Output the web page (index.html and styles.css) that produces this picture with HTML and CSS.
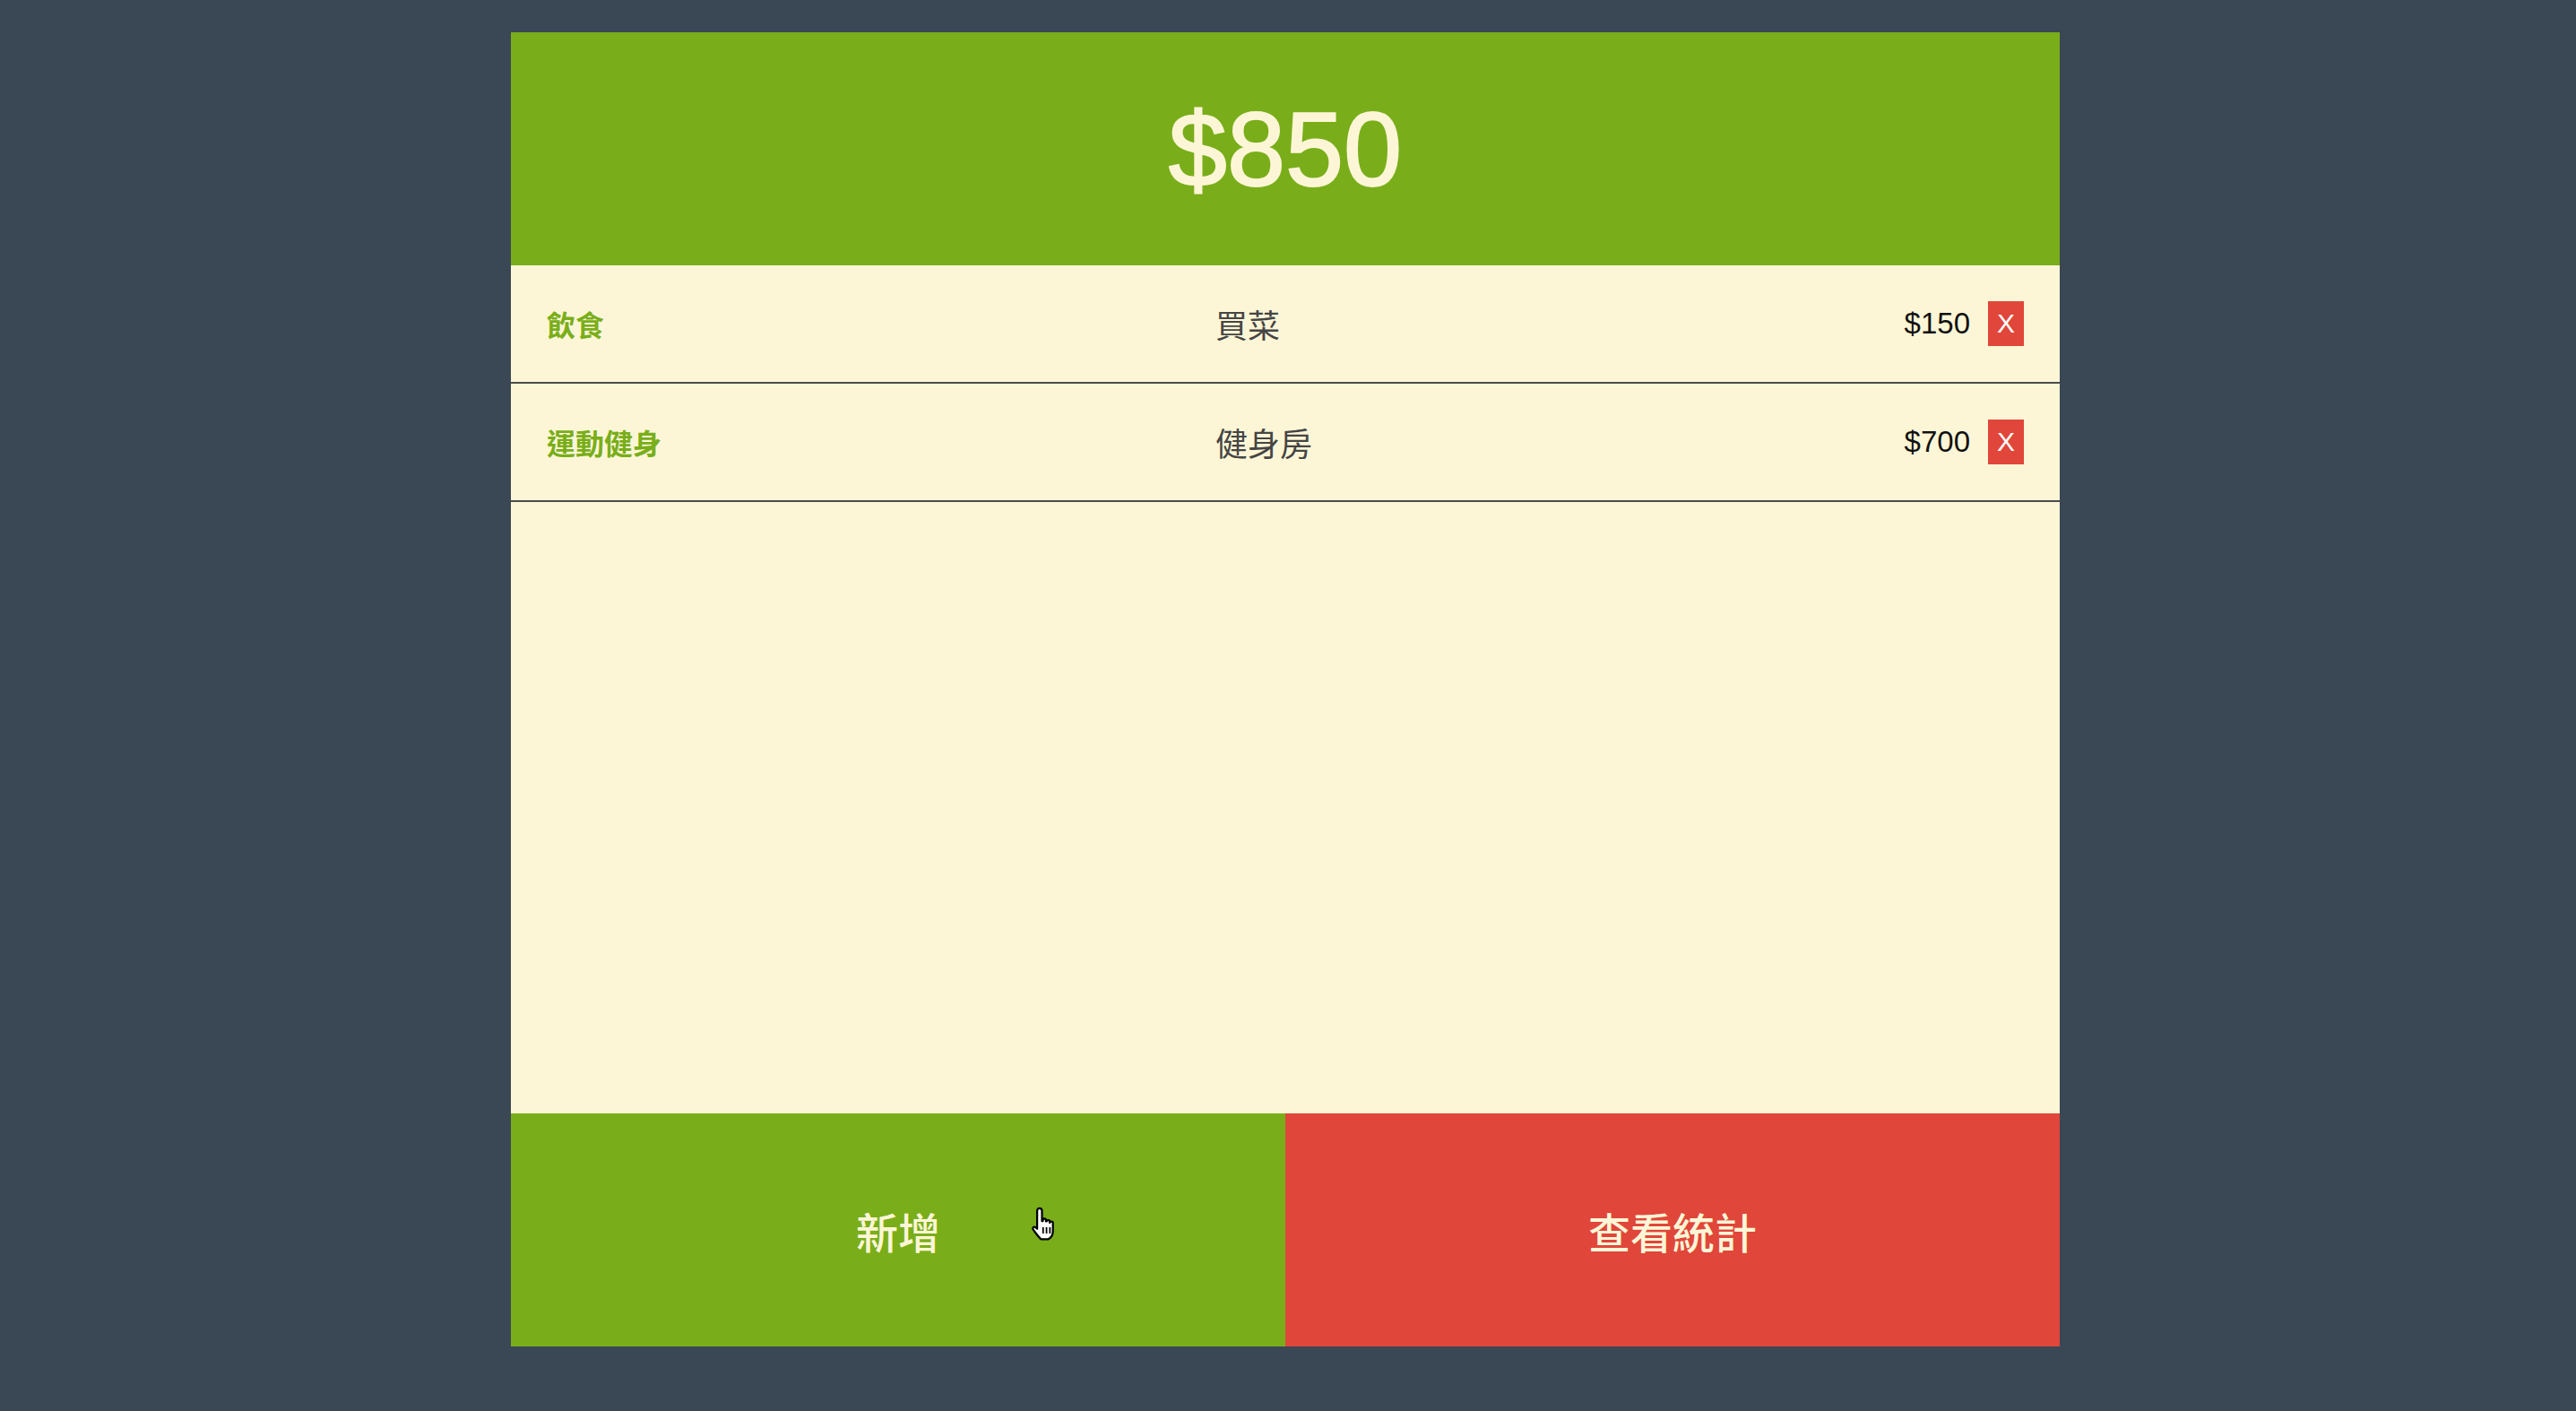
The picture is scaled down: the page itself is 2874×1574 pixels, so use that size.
FILE: index.html
```html
<!DOCTYPE html>
<html lang="zh-Hant">
<head>
<meta charset="utf-8">
<title>記帳</title>
<link rel="stylesheet" href="styles.css">
</head>
<body>
<div class="page">
  <main class="app">
    <header class="total">$850</header>
    <section class="list">
      <div class="row">
        <span class="cat">飲食</span>
        <span class="desc">買菜</span>
        <span class="amount">$150</span>
        <span class="del">X</span>
      </div>
      <div class="row">
        <span class="cat">運動健身</span>
        <span class="desc">健身房</span>
        <span class="amount">$700</span>
        <span class="del">X</span>
      </div>
    </section>
    <footer class="actions">
      <div class="btn btn-add">新增
        <svg class="cursor" viewBox="0 0 20 24" width="32" height="38" aria-hidden="true">
          <path d="M6 1.2c1 0 1.8.8 1.8 1.8v7.2h.6V9.4c0-1.2 2.2-1.2 2.2 0v1h.5c0-1.2 2.2-1.2 2.2 0v1c0-1.2 2.2-1.2 2.2 0v6c0 2.8-1.6 4.8-3.4 5.6H7.4C5.6 22 3.4 18.6 1.6 16.2c-.8-1.1.3-2.6 1.8-1.6l1 1V3c0-1 .6-1.8 1.6-1.8z" fill="#fff" stroke="#000" stroke-width="1.4" stroke-linejoin="round"/>
          <path d="M8.6 14.5v4.5M11 14.5v4.5M13.4 14.5v4.5" stroke="#000" stroke-width="1.1"/>
        </svg>
      </div>
      <div class="btn btn-stats">查看統計</div>
    </footer>
  </main>
</div>
</body>
</html>
```
FILE: styles.css
```css
html, body {
  margin: 0;
  padding: 0;
  background: #3a4754;
}
.page {
  display: flex;
  justify-content: center;
  padding: 36px 6px 0 0;
}
.app {
  width: 1728px;
  display: flex;
  flex-direction: column;
  background: #fdf6d6;
}
.total {
  height: 260px;
  background: #79ae1a;
  color: #fdf6d6;
  font-family: "Liberation Sans", Arial, sans-serif;
  font-size: 117px;
  -webkit-text-stroke: 2px #fdf6d6;
  display: flex;
  align-items: center;
  justify-content: center;
}
.list {
  height: 946px;
  background: #fdf6d6;
}
.row {
  height: 130px;
  border-bottom: 2px solid #4b4b4b;
  padding: 0 40px;
  display: flex;
  align-items: center;
}
.cat {
  width: 746px;
  flex: none;
  font-family: "Noto Sans CJK TC", sans-serif;
  font-weight: 700;
  font-size: 32px;
  color: #79ae1a;
}
.desc {
  flex: 1;
  font-family: "Noto Sans CJK TC", sans-serif;
  font-weight: 400;
  font-size: 36px;
  color: #454545;
}
.amount {
  font-family: "Liberation Sans", Arial, sans-serif;
  font-size: 33px;
  color: #111;
}
.del {
  margin-left: 20px;
  width: 40px;
  height: 50px;
  background: #e0463a;
  color: #fff;
  font-family: "Liberation Sans", Arial, sans-serif;
  font-size: 30px;
  display: flex;
  align-items: center;
  justify-content: center;
}
.actions {
  display: flex;
  height: 260px;
}
.btn {
  flex: 1;
  display: flex;
  align-items: center;
  justify-content: center;
  font-family: "Noto Sans CJK TC", sans-serif;
  font-weight: 500;
  font-size: 47px;
  color: #fdf6d6;
  position: relative;
}
.btn-add {
  background: #79ae1a;
}
.btn-stats {
  background: #e0463a;
}
.cursor {
  position: absolute;
  left: 580px;
  top: 104px;
}
```
